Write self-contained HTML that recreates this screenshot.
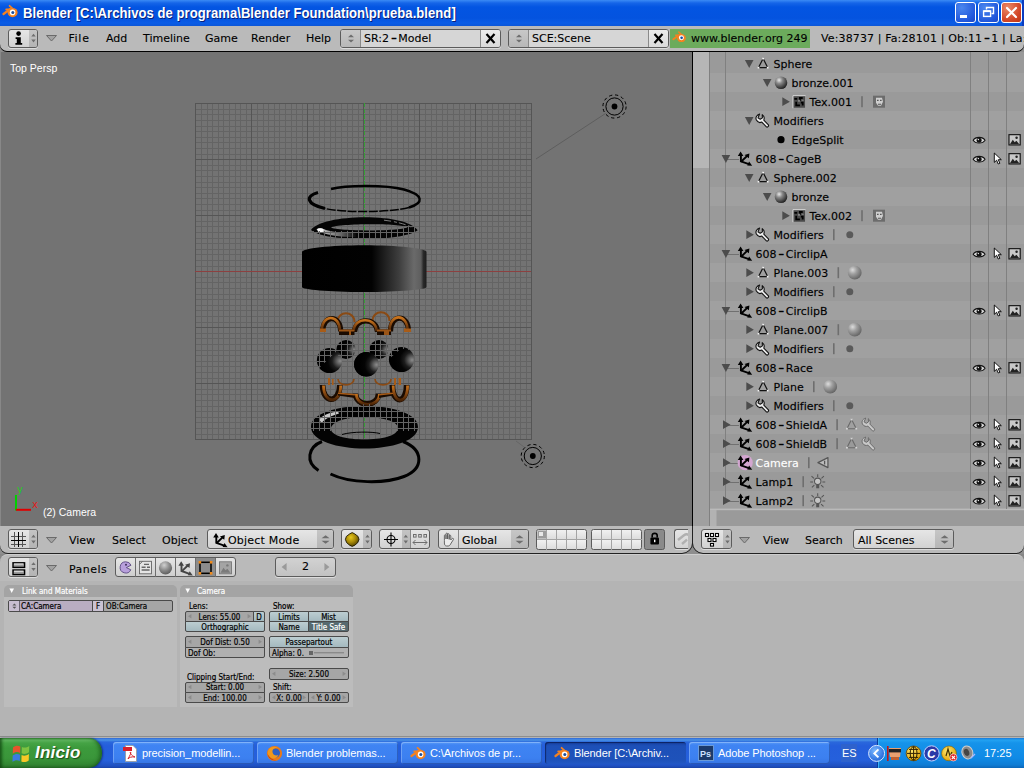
<!DOCTYPE html>
<html lang="es">
<head>
<meta charset="utf-8">
<title>Blender [C:\Archivos de programa\Blender Foundation\prueba.blend]</title>
<style>
html,body{margin:0;padding:0;}
body{width:1024px;height:768px;overflow:hidden;position:relative;background:#b4b4b4;font-family:"DejaVu Sans","Liberation Sans",sans-serif;font-size:11px;color:#000;}
.abs{position:absolute;}
div,span,svg{box-sizing:border-box;}
.t{position:absolute;white-space:pre;line-height:13px;height:13px;font-size:11px;-webkit-text-stroke:.18px rgba(0,0,0,.6);}
.hy{display:inline-block;width:9.2px;text-align:center;}
.hy i{display:inline-block;font-style:normal;transform:scale(1.5,1.15);transform-origin:50% 62%;-webkit-text-stroke:.25px #000;}
/* XP title bar */
#title{left:0;top:0;width:1024px;height:26px;box-shadow:inset -2px 0 0 #0b3cc0;background:linear-gradient(#3b8bf5 0,#1565e8 3px,#0355e2 7px,#0453df 18px,#0a5ce6 23px,#0b56d8 26px);}
#title .tt{position:absolute;left:22.6px;top:5.5px;transform:scale(1.006,1.1);transform-origin:0 55%;font:bold 13px "Liberation Sans",sans-serif;color:#fff;white-space:pre;text-shadow:1px 1px 0 #0a1f7a;letter-spacing:0.04px;}
.wb{position:absolute;top:2px;width:21px;height:21px;border:1px solid #fff;border-radius:3px;background:radial-gradient(circle at 30% 25%,#4a86ee,#2258dc 70%,#1a48c8);}
.wb.cl{background:radial-gradient(circle at 30% 25%,#ea8a68,#d4492a 60%,#bf3513);}
/* blender headers */
.hdr{background:#bababa;}
.btn{position:absolute;border:1px solid #5c5c5c;border-radius:3px;background:linear-gradient(#e6e6e6,#d2d2d2);box-shadow:0 1px 0 #dcdcdc;}
.menu{position:absolute;top:32px;}
</style>
</head>
<body>
<!-- XP title bar -->
<div id="title" class="abs">
<svg class="abs" style="left:2px;top:4px" width="18" height="16" viewBox="0 0 18 16"><g fill="none" stroke="#f5821f" stroke-linecap="round"><path d="M1.5 10 L8 5.2" stroke-width="2.2"/><path d="M4.2 5.4 H9" stroke-width="1.8"/><path d="M7.6 1.8 L10.6 4.6" stroke-width="1.8"/></g><ellipse cx="10.6" cy="8.6" rx="5" ry="4.6" fill="#f5821f"/><circle cx="10.6" cy="8.4" r="2.8" fill="#fff"/><circle cx="10.8" cy="8.4" r="1.5" fill="#1a4fa0"/></svg>
<span class="tt">Blender [C:\Archivos de programa\Blender Foundation\prueba.blend]</span>
<div class="wb" style="left:955px"><div class="abs" style="left:4px;top:12px;width:7px;height:3px;background:#fff"></div></div>
<div class="wb" style="left:978px"><svg class="abs" style="left:0;top:0" width="19" height="19"><path d="M7.5 6.5 V4.5 H14.5 V10.5 H12.5" fill="none" stroke="#fff" stroke-width="1.4"/><rect x="4.6" y="8" width="7" height="5.4" fill="none" stroke="#fff" stroke-width="1.4"/><path d="M4.6 8.2 H11.6" stroke="#fff" stroke-width="1.8"/></svg></div>
<div class="wb cl" style="left:1001px"><svg class="abs" style="left:0;top:0" width="19" height="19"><path d="M5 5 L14 14 M14 5 L5 14" stroke="#fff" stroke-width="2.2" stroke-linecap="round"/></svg></div>
</div>
<!-- info header -->
<div class="abs" style="left:0;top:26px;width:1024px;height:26px;background:#8e8e8e"></div>
<div class="abs hdr" style="left:0;top:26px;width:1024px;height:25px;border-radius:0 0 7px 7px/0 0 7px 7px;box-shadow:0 1px 0 #000"></div>
<div class="btn" style="left:8px;top:29px;width:30px;height:19px;overflow:hidden"><div class="abs" style="left:20px;top:0;width:9px;height:17px;background:linear-gradient(#c4c4c4,#b4b4b4)"></div>
<svg class="abs" style="left:0;top:0" width="28" height="17"><circle cx="9.6" cy="3.6" r="2.3" fill="#000"/><path d="M6.6 7.2 H11.8 V13 H13.2 V14.8 H6.4 V13 H7.8 V9 H6.6 Z" fill="#000"/><path d="M22.3 6.6 L24.5 3.8 L26.7 6.6 Z M22.3 9.6 L24.5 12.4 L26.7 9.6 Z" fill="#6e6e6e"/></svg></div>
<svg class="abs" style="left:45px;top:34px" width="14" height="9"><path d="M1.5 1.5 H11.5 L6.5 7 Z" fill="#a2a2a2" stroke="#6a6a6a" stroke-width="1"/></svg>
<span class="t" style="left:68.4px;top:32px;letter-spacing:.7px">File</span>
<span class="t" style="left:106px;top:32px">Add</span>
<span class="t" style="left:143px;top:32px">Timeline</span>
<span class="t" style="left:205px;top:32px">Game</span>
<span class="t" style="left:251px;top:32px">Render</span>
<span class="t" style="left:306px;top:32px">Help</span>
<!-- SR box -->
<div class="btn" style="left:340px;top:29px;width:161px;height:19px;background:#d6d6d6;overflow:hidden">
<div class="abs" style="left:0;top:0;width:20px;height:17px;background:linear-gradient(#c8c8c8,#b8b8b8);border-right:1px solid #8a8a8a"></div>
<svg class="abs" style="left:0;top:0" width="20" height="17"><path d="M7 7.2 L10 4.4 L13 7.2 Z M7 9.8 L10 12.6 L13 9.8 Z" fill="#6e6e6e"/></svg>
<div class="abs" style="left:139px;top:0;width:20px;height:17px;background:linear-gradient(#ececec,#dadada);border-left:1px solid #8a8a8a"></div>
<svg class="abs" style="left:140px;top:0" width="19" height="17"><path d="M5.5 4 L13.5 13 M13.5 4 L5.5 13" stroke="#000" stroke-width="2.2"/></svg>
</div>
<span class="t" style="left:364px;top:32px">SR:2<span class="hy"><i>-</i></span>Model</span>
<!-- SCE box -->
<div class="btn" style="left:508px;top:29px;width:161px;height:19px;background:#d6d6d6;overflow:hidden">
<div class="abs" style="left:0;top:0;width:20px;height:17px;background:linear-gradient(#c8c8c8,#b8b8b8);border-right:1px solid #8a8a8a"></div>
<svg class="abs" style="left:0;top:0" width="20" height="17"><path d="M7 7.2 L10 4.4 L13 7.2 Z M7 9.8 L10 12.6 L13 9.8 Z" fill="#6e6e6e"/></svg>
<div class="abs" style="left:139px;top:0;width:20px;height:17px;background:linear-gradient(#ececec,#dadada);border-left:1px solid #8a8a8a"></div>
<svg class="abs" style="left:140px;top:0" width="19" height="17"><path d="M5.5 4 L13.5 13 M13.5 4 L5.5 13" stroke="#000" stroke-width="2.2"/></svg>
</div>
<span class="t" style="left:532px;top:32px">SCE:Scene</span>
<!-- green link -->
<div class="abs" style="left:670px;top:29px;width:140px;height:19px;background:#6cab5c"></div>
<svg class="abs" style="left:672px;top:30px" width="16" height="15" viewBox="0 0 18 16"><g fill="none" stroke="#f5821f" stroke-linecap="round"><path d="M1.5 10 L8 5.2" stroke-width="2.2"/><path d="M4.2 5.4 H9" stroke-width="1.8"/><path d="M7.6 1.8 L10.6 4.6" stroke-width="1.8"/></g><ellipse cx="10.6" cy="8.6" rx="5" ry="4.6" fill="#f5821f"/><circle cx="10.6" cy="8.4" r="2.8" fill="#fff"/><circle cx="10.8" cy="8.4" r="1.5" fill="#1a4fa0"/></svg>
<span class="t" style="left:691px;top:32px">www.blender.org 249</span>
<span class="t" style="left:821px;top:32px;letter-spacing:.13px">Ve:38737 | Fa:28101 | Ob:11<span class="hy"><i>-</i></span>1 | La:2</span>
<!-- 3D view -->
<svg class="abs" style="left:0;top:52px" width="692" height="474" viewBox="0 0 692 474">
<defs>
<g id="grid" shape-rendering="crispEdges" fill="none"><path d="M201.5 51V388M195 57.5H532M207.5 51V388M195 62.5H532M212.5 51V388M195 68.5H532M218.5 51V388M195 74.5H532M223.5 51V388M195 79.5H532M229.5 51V388M195 85.5H532M235.5 51V388M195 90.5H532M240.5 51V388M195 96.5H532M246.5 51V388M195 102.5H532M257.5 51V388M195 113.5H532M263.5 51V388M195 118.5H532M268.5 51V388M195 124.5H532M274.5 51V388M195 130.5H532M279.5 51V388M195 135.5H532M285.5 51V388M195 141.5H532M291.5 51V388M195 146.5H532M296.5 51V388M195 152.5H532M302.5 51V388M195 158.5H532M313.5 51V388M195 169.5H532M319.5 51V388M195 174.5H532M324.5 51V388M195 180.5H532M330.5 51V388M195 186.5H532M335.5 51V388M195 191.5H532M341.5 51V388M195 197.5H532M347.5 51V388M195 202.5H532M352.5 51V388M195 208.5H532M358.5 51V388M195 214.5H532M369.5 51V388M195 225.5H532M375.5 51V388M195 230.5H532M380.5 51V388M195 236.5H532M386.5 51V388M195 242.5H532M391.5 51V388M195 247.5H532M397.5 51V388M195 253.5H532M403.5 51V388M195 258.5H532M408.5 51V388M195 264.5H532M414.5 51V388M195 270.5H532M425.5 51V388M195 281.5H532M431.5 51V388M195 286.5H532M436.5 51V388M195 292.5H532M442.5 51V388M195 298.5H532M447.5 51V388M195 303.5H532M453.5 51V388M195 309.5H532M459.5 51V388M195 314.5H532M464.5 51V388M195 320.5H532M470.5 51V388M195 326.5H532M481.5 51V388M195 337.5H532M487.5 51V388M195 342.5H532M492.5 51V388M195 348.5H532M498.5 51V388M195 354.5H532M503.5 51V388M195 359.5H532M509.5 51V388M195 365.5H532M515.5 51V388M195 370.5H532M520.5 51V388M195 376.5H532M526.5 51V388M195 382.5H532" stroke="#646464" stroke-width="1"/><path d="M195.5 51V388M195 51.5H532M251.5 51V388M195 107.5H532M307.5 51V388M195 163.5H532M363.5 51V388M195 219.5H532M419.5 51V388M195 275.5H532M475.5 51V388M195 331.5H532M531.5 51V388M195 387.5H532" stroke="#555" stroke-width="1"/></g>
<linearGradient id="race" x1="0" x2="1" y1="0" y2="0"><stop offset="0" stop-color="#000"/><stop offset=".56" stop-color="#020202"/><stop offset=".66" stop-color="#1e1e1e"/><stop offset=".78" stop-color="#3e3e3e"/><stop offset=".9" stop-color="#6a6a6a"/><stop offset=".955" stop-color="#5e5e5e"/><stop offset=".975" stop-color="#2a2a2a"/><stop offset="1" stop-color="#1c1c1c"/></linearGradient>
<radialGradient id="ball" cx=".92" cy=".52" r=".7"><stop offset="0" stop-color="#8c8c8c"/><stop offset=".2" stop-color="#5c5c5c"/><stop offset=".45" stop-color="#1c1c1c"/><stop offset=".7" stop-color="#040404"/><stop offset="1" stop-color="#000"/></radialGradient>
<linearGradient id="brz" x1="0" x2="0" y1="0" y2="1"><stop offset="0" stop-color="#c8741e"/><stop offset=".5" stop-color="#8a4a12"/><stop offset="1" stop-color="#4a2406"/></linearGradient>
<clipPath id="cS1"><path d="M300 179 H345 L380 177 L430 171 V190 H300Z"/></clipPath>
<clipPath id="cS2"><path d="M300 352 H430 V379 H300 Z"/></clipPath>
<clipPath id="cB"><circle cx="346" cy="297.5" r="10"/><circle cx="379" cy="297.5" r="10"/><path d="M312 288 H341 V295 L318 317 H312Z"/><path d="M385 288 H415 V299 L401 296.5 L389 307 H385Z"/></clipPath>
</defs>
<rect width="692" height="474" fill="#737373"/>
<use href="#grid"/>
<path d="M195 219.5H531" stroke="#8c4040" stroke-width="1" shape-rendering="crispEdges"/>
<path d="M364.5 51V387" stroke="#35a035" stroke-width="1" stroke-dasharray="4.4 1.2" shape-rendering="crispEdges"/>
<path d="M536 107L605.5 61.5" stroke="#5e5e5e" stroke-width="1"/>
<path d="M516 389L524 395" stroke="#666" stroke-width="1"/>
<g fill="none" stroke="#000"><circle cx="614.5" cy="54.5" r="8.6" stroke-width="1"/><circle cx="614.5" cy="54.5" r="11.6" stroke-width="1" stroke-dasharray="3.2 2.9"/><circle cx="614.5" cy="54.5" r="2.9" fill="#000" stroke="none"/></g>
<g fill="none" stroke="#000"><circle cx="532.8" cy="404" r="8.6" stroke-width="1"/><circle cx="532.8" cy="404" r="11.6" stroke-width="1" stroke-dasharray="3.2 2.9"/><circle cx="532.8" cy="404" r="2.9" fill="#000" stroke="none"/></g>
<g fill="none" stroke="#000" stroke-linecap="butt">
<path d="M331 137 C345 133.3 385 132.5 404 137.5 C424 143 424 151 409 155.5" stroke-width="2.4"/>
<path d="M409 155.5 C390 160.5 345 161 325 156.5" stroke-width="1.5" stroke-dasharray="9 1.5"/>
<path d="M325 156.5 C306 152 305 144 318 140.5" stroke-width="3.2"/>
</g>
<path fill-rule="evenodd" fill="#050505" d="M311 178 C316 170 340 165.2 364.5 165.2 C392 165.2 412 170 417.7 178.3 C412 182.5 395 187 364.5 187 C338 187 318 184 311 178 Z M331 175.6 C338 179.5 400 179.5 407.5 175.3 C400 171.2 338 171.4 331 175.6 Z"/>
<linearGradient id="shl" x1="0" x2="1" y1="0" y2="0"><stop offset="0" stop-color="#e8e8e8"/><stop offset=".25" stop-color="#a8a8a8"/><stop offset=".6" stop-color="#6a6a6a"/><stop offset="1" stop-color="#0a0a0a"/></linearGradient>
<path d="M316.5 177.5 C318 175.5 322 175.8 326 178 C334 180.5 345 181 356 181.2 L356 185 C340 185 324 183.5 316.5 177.5Z" fill="url(#shl)"/>
<ellipse cx="320.5" cy="178.2" rx="3" ry="1.9" fill="#f6f6f6"/>
<path d="M384 168.2 C396 169.5 407 172.5 413 176" fill="none" stroke="#8a8a8a" stroke-width=".9" stroke-dasharray="7 3 3 2"/>
<g clip-path="url(#cS1)"><use href="#grid"/></g>
<path fill="url(#race)" d="M302 200 C302 196.5 330 193.3 364 193.3 C398 193.3 426.5 196.5 426.5 200 V235 C426.5 237.5 400 240 364 240 C328 240 302 237.5 302 235 Z"/>
<g>
<path d="M337.5 270 C337.5 258.3 354.5 258.3 354.5 270" fill="none" stroke="#8a4a14" stroke-width="2"/>
<path d="M372.5 269 C372.5 257.3 389.5 257.3 389.5 269" fill="none" stroke="#8a4a14" stroke-width="2"/>
<path d="M322.7 279.5 C322.7 262.34 340.7 262.34 340.7 279.5" fill="none" stroke="#1a0b01" stroke-width="5.2"/>
<path d="M321.8 278.8 C321.8 261.64 339.8 261.64 339.8 278.8" fill="none" stroke="url(#brz)" stroke-width="2.6"/>
<path d="M354.5 280 C354.5 265.18 377.5 265.18 377.5 280" fill="none" stroke="#1a0b01" stroke-width="5.2"/>
<path d="M353.6 279.3 C353.6 264.48 376.6 264.48 376.6 279.3" fill="none" stroke="url(#brz)" stroke-width="2.6"/>
<path d="M390.5 279.5 C390.5 261.56 408.5 261.56 408.5 279.5" fill="none" stroke="#1a0b01" stroke-width="5.2"/>
<path d="M389.6 278.8 C389.6 260.86 407.6 260.86 407.6 278.8" fill="none" stroke="url(#brz)" stroke-width="2.6"/>
<path d="M320 276.5 h6 v3.4 h-6z M404 276.5 h7 v3.4 h-7z" fill="#a85c18"/>
<path d="M339 277.5 h15.5 v5.6 h-15.5z M377 277.5 h14 v5.6 h-14z" fill="#1a0b01"/>
<path d="M339 277.5 h15.5 v2 h-15.5z M377 277.5 h14 v2 h-14z M349 279.5 h2 v3.6 h-2z M384 279.5 h5 v3.6 h-5z" fill="#9a5416"/>
</g>
<circle cx="346" cy="297.5" r="9.6" fill="url(#ball)"/><circle cx="379" cy="297.5" r="9.6" fill="url(#ball)"/>
<circle cx="329.5" cy="308.5" r="12.6" fill="url(#ball)"/><circle cx="401.5" cy="307.5" r="12.6" fill="url(#ball)"/><circle cx="366.3" cy="312.3" r="12.2" fill="url(#ball)"/>
<g clip-path="url(#cB)"><use href="#grid"/></g>
<circle cx="366.3" cy="312.3" r="12.2" fill="url(#ball)"/>
<g>
<path d="M338 327 C338 334.8 354 334.8 354 327" fill="none" stroke="#8a4a14" stroke-width="1.6"/>
<path d="M375 327 C375 334.8 391 334.8 391 327" fill="none" stroke="#8a4a14" stroke-width="1.6"/>
<path d="M328 326 h2 v7 h-2z M332 327 h1.6 v6 h-1.6z M394 326 h2 v7 h-2z M398.6 326 h2.4 v7 h-2.4z" fill="#a85c18"/>
<path d="M322.59999999999997 333 C322.59999999999997 351.98 339.8 351.98 339.8 333" fill="none" stroke="#1a0b01" stroke-width="5.6"/>
<path d="M323.49999999999994 333.6 C323.49999999999994 352.58000000000004 340.7 352.58000000000004 340.7 333.6" fill="none" stroke="url(#brz)" stroke-width="2.8"/>
<path d="M355.5 341.5 C355.5 355.28 378.5 355.28 378.5 341.5" fill="none" stroke="#1a0b01" stroke-width="5.6"/>
<path d="M356.4 342.1 C356.4 355.88 379.4 355.88 379.4 342.1" fill="none" stroke="url(#brz)" stroke-width="2.8"/>
<path d="M392.3 333 C392.3 352.5 406.7 352.5 406.7 333" fill="none" stroke="#1a0b01" stroke-width="5.6"/>
<path d="M393.2 333.6 C393.2 353.1 407.59999999999997 353.1 407.59999999999997 333.6" fill="none" stroke="url(#brz)" stroke-width="2.8"/>
<path d="M338 340.5 l17 1.5 v4 l-17 -2.5z M379 342 l14 -1.5 v3 l-14 2.5z" fill="#1a0b01"/><path d="M338 340.5 l17 1.5 v1.6 l-17 -1.5z M379 342 l14 -1.5 v1.4 l-14 1.5z" fill="#a85c18"/>
</g>
<path fill-rule="evenodd" fill="#030303" d="M311 375 C311 361 338 354 364.5 354 C391 354 418 361 418 375 C418 389 391 396.5 364.5 396.5 C338 396.5 311 389 311 375 Z M331 377 C331 384 348 387.5 364.5 387.5 C381 387.5 398 384 398 376 C398 369 381 365 364.5 365 C348 365 331 369 331 377 Z"/>
<path d="M319 368 C322 363 330 360.5 338 359.5 L339 361.5 C331 364 324 367 322 371 Z" fill="#c8c8c8"/>
<g clip-path="url(#cS2)"><use href="#grid"/></g>
<path d="M342 382.5 C352 379.5 372 379.5 380 381.5" stroke="#000" stroke-width="1" fill="none"/>
<g fill="none" stroke="#000">
<path d="M322 389.5 C308 395 305 410 318.5 418.5" stroke-width="3"/>
<path d="M330.5 422 C350 431.5 385 432 404 424.5 C424 416.5 424 398 403 389.5" stroke-width="3"/>
</g>
<path d="M16 443V458.6" stroke="#00d000" stroke-width="2"/><path d="M16 457.8H31" stroke="#e00000" stroke-width="2"/><rect x="0" y="0" width="1" height="474" fill="#888"/>
<text x="17" y="441" font-family="DejaVu Sans, sans-serif" font-size="10" fill="#22cc22">y</text>
<text x="32" y="456" font-family="DejaVu Sans, sans-serif" font-size="10" fill="#e02020">x</text>
<text x="10" y="20" font-family="Liberation Sans, sans-serif" font-size="10.5" fill="#fff">Top Persp</text>
<text x="43" y="464" font-family="Liberation Sans, sans-serif" font-size="10.5" fill="#fff">(2) Camera</text>
</svg>
<!-- outliner -->
<div class="abs" style="left:692px;top:52px;width:1px;height:492px;background:#000"></div>
<svg style="left:693px;top:52px" width="331" height="474" viewBox="693 52 331 474" class="abs ol" font-family="DejaVu Sans, sans-serif" font-size="11">
<defs>
<radialGradient id="gmat" cx=".35" cy=".3" r=".75"><stop offset="0" stop-color="#e8e8e8"/><stop offset=".35" stop-color="#8a8a8a"/><stop offset="1" stop-color="#1c1c1c"/></radialGradient>
<radialGradient id="gmatl" cx=".35" cy=".3" r=".75"><stop offset="0" stop-color="#dcdcdc"/><stop offset=".4" stop-color="#a0a0a0"/><stop offset="1" stop-color="#606060"/></radialGradient>
<symbol id="i-obj" viewBox="0 0 14 14" overflow="visible"><g stroke="#000" fill="none" stroke-width="1.9"><path d="M2.9 3.5 V9.6 L11.6 12.7"/><path d="M3.1 10 L9.4 3.9"/></g><path d="M2.6 -.2 L5.4 4.3 H-.2 Z M11.4 1.8 L10.9 6.6 L6.5 3.3 Z M14.2 14.1 L9.2 13.9 L11.1 9.8 Z" fill="#000"/></symbol>
<symbol id="i-mesh" viewBox="0 0 14 14" overflow="visible"><path d="M7 1.6 L12 11.4 H2 Z" fill="none" stroke="#111" stroke-width="1.3"/><g fill="#f4f4f4"><rect x="6" y=".6" width="2" height="2"/><rect x="1" y="10.4" width="2" height="2"/><rect x="11" y="10.4" width="2" height="2"/></g></symbol>
<symbol id="i-meshl" viewBox="0 0 14 14" overflow="visible"><path d="M7 1.6 L12 11.4 H2 Z" fill="none" stroke="#6a6a6a" stroke-width="1.2"/><g fill="#d4d4d4"><rect x="6" y=".6" width="2" height="2"/><rect x="1" y="10.4" width="2" height="2"/><rect x="11" y="10.4" width="2" height="2"/></g></symbol>
<symbol id="i-wrench" viewBox="0 0 15 15" overflow="visible"><path d="M4.6 .8 C1.6 1.4 .2 4.4 1.4 6.8 C2.6 9 5 9.6 6.8 8.8 L11.4 13.6 C12.4 14.4 14.2 12.8 13.4 11.6 L8.8 6.8 C9.6 4.8 9 2.6 7.2 1.4 L7.4 4.6 L5.2 6 L3 4.6 Z" fill="#ececec" stroke="#111" stroke-width="1.1" stroke-linejoin="round"/></symbol>
<symbol id="i-wrenchl" viewBox="0 0 15 15" overflow="visible"><path d="M4.6 .8 C1.6 1.4 .2 4.4 1.4 6.8 C2.6 9 5 9.6 6.8 8.8 L11.4 13.6 C12.4 14.4 14.2 12.8 13.4 11.6 L8.8 6.8 C9.6 4.8 9 2.6 7.2 1.4 L7.4 4.6 L5.2 6 L3 4.6 Z" fill="#c8c8c8" stroke="#6a6a6a" stroke-width="1" stroke-linejoin="round"/></symbol>
<symbol id="i-tex" viewBox="0 0 14 14" overflow="visible"><rect x=".5" y=".5" width="13" height="13" fill="#4a4a4a"/><path d="M.5 14V.5H14" fill="none" stroke="#e0e0e0" stroke-width="1"/><path d="M2 3 h3 v2 h-3z M7 2 h4 v2 h-2 v2 h-2z M3 7 h2 v3 h3 v2 h-5z M9 7 h3 v4 h-2 v-2 h-1z" fill="#000"/><path d="M6 5 h2 v2 h-2z M10 5 h2 v1 h-2z" fill="#8a8a8a"/></symbol>
<symbol id="i-teximg" viewBox="0 0 12 12" overflow="visible"><rect width="12" height="12" fill="#6c6c6c"/><path d="M3 2 h6 l1 4 l-2 4 h-3 l-2 -3z" fill="#cfcfcf"/><path d="M4 4 h1.6 v1.4 h-1.6z M7 4 h1.6 v1.4 h-1.6z M5 8 h3 v1 h-3z" fill="#555"/></symbol>
<symbol id="i-eye" viewBox="0 0 14 10" overflow="visible"><path d="M.6 5 C3 1 11 1 13.4 5 C11 9 3 9 .6 5 Z" fill="#d8d8d8" stroke="#111" stroke-width="1.1"/><circle cx="7" cy="5" r="2.7" fill="#111"/><circle cx="6.2" cy="4.2" r=".8" fill="#ddd"/></symbol>
<symbol id="i-cur" viewBox="0 0 10 14" overflow="visible"><path d="M1 .8 V11.2 L3.6 8.8 L5.4 13 L7.2 12.2 L5.4 8.2 H8.8 Z" fill="#fff" stroke="#000" stroke-width="1" stroke-linejoin="round"/></symbol>
<symbol id="i-ren" viewBox="0 0 13 12" overflow="visible"><rect x=".6" y=".6" width="11.8" height="10.8" fill="#c8c8c8" stroke="#111" stroke-width="1.2"/><path d="M1.6 10.6 L4.6 6 L6.6 8.6 L8.4 7 L11.4 10.6 Z" fill="#222"/><circle cx="8.6" cy="3.8" r="1.3" fill="#222"/></symbol>
<symbol id="i-cam" viewBox="0 0 14 14" overflow="visible"><path d="M1.2 7 L12 1.6 V12.4 Z" fill="#bdbdbd" stroke="#555" stroke-width="1.3" stroke-linejoin="round"/><path d="M8.4 5 V9" stroke="#555" stroke-width="1.4"/></symbol>
<symbol id="i-lamp" viewBox="0 0 16 16" overflow="visible"><g stroke="#555" stroke-width="1.1" fill="none"><path d="M8 0 V3 M1.4 2 L4 4.4 M14.6 2 L12 4.4 M0 8.4 H3 M16 8.4 H13 M1.8 14 L4.4 11.6 M14.2 14 L11.6 11.6"/><circle cx="8" cy="7.6" r="3.4" fill="#c4c4c4"/></g><rect x="6.4" y="11" width="3.2" height="4" fill="#555"/></symbol>
</defs>
<style>.ol text{stroke:#000;stroke-width:.3px;stroke-opacity:.5}.ol text.w{stroke:#fff}</style>
<rect x="693" y="52" width="331" height="474" fill="#a0a0a0"/>
<rect x="709" y="52.0" width="315" height="21" fill="#9a9a9a"/>
<rect x="709" y="92.0" width="315" height="19" fill="#9a9a9a"/>
<rect x="709" y="130.0" width="315" height="19" fill="#9a9a9a"/>
<rect x="709" y="168.0" width="315" height="19" fill="#9a9a9a"/>
<rect x="709" y="206.0" width="315" height="19" fill="#9a9a9a"/>
<rect x="709" y="244.0" width="315" height="19" fill="#9a9a9a"/>
<rect x="709" y="282.0" width="315" height="19" fill="#9a9a9a"/>
<rect x="709" y="320.0" width="315" height="19" fill="#9a9a9a"/>
<rect x="709" y="358.0" width="315" height="19" fill="#9a9a9a"/>
<rect x="709" y="396.0" width="315" height="19" fill="#9a9a9a"/>
<rect x="709" y="434.0" width="315" height="19" fill="#9a9a9a"/>
<rect x="709" y="472.0" width="315" height="19" fill="#9a9a9a"/>
<rect x="693" y="52" width="16" height="474" fill="#a0a0a0"/>
<rect x="693" y="52" width="16" height="116" fill="#b6b6b6"/>
<rect x="709" y="509.7" width="315" height="16.3" fill="#9a9a9a"/>
<rect x="709" y="508.6" width="315" height="1.6" fill="#bababa"/>
<rect x="709" y="510" width="7.5" height="16" fill="#b2b2b2"/>
<g shape-rendering="crispEdges" stroke="#808080" stroke-width="1"><path d="M709.5 52V526M725.5 52V501M970.5 52V509M988.5 52V509M1006.5 52V509"/></g>
<path d="M744.9 59.900000000000006 h8.6 l-4.3 8 Z" fill="#4c4c4c"/>
<use href="#i-mesh" x="756.6" y="57.1" width="13" height="13"/>
<text x="773.6" y="68.0">Sphere</text>
<path d="M762.9 78.9 h8.6 l-4.3 8 Z" fill="#4c4c4c"/>
<circle cx="781.0" cy="82.7" r="6.3" fill="url(#gmat)"/>
<text x="791.6" y="87.0">bronze.001</text>
<path d="M782.3 97.3 v8.8 l7.6 -4.4 Z" fill="#4c4c4c"/>
<use href="#i-tex" x="792.5" y="95.2" width="13" height="13"/>
<text x="809.6" y="106.0">Tex.001</text>
<rect x="861.2" y="96.2" width="1.6" height="11" fill="#6e6e6e"/>
<use href="#i-teximg" x="873.0" y="95.7" width="12" height="12"/>
<path d="M744.9 116.9 h8.6 l-4.3 8 Z" fill="#4c4c4c"/>
<use href="#i-wrench" x="755.0" y="113.3" width="15" height="15"/>
<text x="773.6" y="125.0">Modifiers</text>
<circle cx="781.0" cy="139.7" r="3.6" fill="#000"/>
<text x="791.6" y="144.0">EdgeSplit</text>
<use href="#i-eye" x="972.6" y="135.5" width="13" height="9.3"/>
<use href="#i-ren" x="1008.4" y="134.1" width="12.4" height="11.4"/>
<path d="M725 159.2H739.0" stroke="#707070" stroke-width="1" shape-rendering="crispEdges"/>
<path d="M721.6 154.89999999999998 h8.6 l-4.3 8 Z" fill="#4c4c4c"/>
<use href="#i-obj" x="738.0" y="151.7" width="14" height="14"/>
<text x="755.6" y="163.0">608</text>
<text x="0" y="0" transform="translate(778.3 163.0) scale(1.5 1.15)" style="stroke-width:.3px;stroke-opacity:.9">-</text>
<text x="785.8" y="163.0">CageB</text>
<use href="#i-eye" x="972.6" y="154.5" width="13" height="9.3"/>
<use href="#i-cur" x="993.4" y="152.29999999999998" width="9" height="12.6"/>
<use href="#i-ren" x="1008.4" y="153.1" width="12.4" height="11.4"/>
<path d="M744.9 173.89999999999998 h8.6 l-4.3 8 Z" fill="#4c4c4c"/>
<use href="#i-mesh" x="756.6" y="171.1" width="13" height="13"/>
<text x="773.6" y="182.0">Sphere.002</text>
<path d="M762.9 192.89999999999998 h8.6 l-4.3 8 Z" fill="#4c4c4c"/>
<circle cx="781.0" cy="196.7" r="6.3" fill="url(#gmat)"/>
<text x="791.6" y="201.0">bronze</text>
<path d="M782.3 211.29999999999998 v8.8 l7.6 -4.4 Z" fill="#4c4c4c"/>
<use href="#i-tex" x="792.5" y="209.2" width="13" height="13"/>
<text x="809.6" y="220.0">Tex.002</text>
<rect x="861.2" y="210.2" width="1.6" height="11" fill="#6e6e6e"/>
<use href="#i-teximg" x="873.0" y="209.7" width="12" height="12"/>
<path d="M746.3 230.29999999999998 v8.8 l7.6 -4.4 Z" fill="#4c4c4c"/>
<use href="#i-wrench" x="755.0" y="227.29999999999998" width="15" height="15"/>
<text x="773.6" y="239.0">Modifiers</text>
<rect x="833.0" y="229.2" width="1.6" height="11" fill="#6e6e6e"/>
<circle cx="849.8" cy="234.7" r="3.5" fill="#5a5a5a"/>
<path d="M725 254.2H739.0" stroke="#707070" stroke-width="1" shape-rendering="crispEdges"/>
<path d="M721.6 249.89999999999998 h8.6 l-4.3 8 Z" fill="#4c4c4c"/>
<use href="#i-obj" x="738.0" y="246.7" width="14" height="14"/>
<text x="755.6" y="258.0">608</text>
<text x="0" y="0" transform="translate(778.3 258.0) scale(1.5 1.15)" style="stroke-width:.3px;stroke-opacity:.9">-</text>
<text x="785.8" y="258.0">CirclipA</text>
<use href="#i-eye" x="972.6" y="249.5" width="13" height="9.3"/>
<use href="#i-cur" x="993.4" y="247.29999999999998" width="9" height="12.6"/>
<use href="#i-ren" x="1008.4" y="248.1" width="12.4" height="11.4"/>
<path d="M746.3 268.3 v8.8 l7.6 -4.4 Z" fill="#4c4c4c"/>
<use href="#i-mesh" x="756.6" y="266.09999999999997" width="13" height="13"/>
<text x="773.6" y="277.0">Plane.003</text>
<rect x="837.5" y="267.2" width="1.6" height="11" fill="#6e6e6e"/>
<circle cx="854.7" cy="272.7" r="6.9" fill="url(#gmatl)"/>
<path d="M746.3 287.3 v8.8 l7.6 -4.4 Z" fill="#4c4c4c"/>
<use href="#i-wrench" x="755.0" y="284.3" width="15" height="15"/>
<text x="773.6" y="296.0">Modifiers</text>
<rect x="833.0" y="286.2" width="1.6" height="11" fill="#6e6e6e"/>
<circle cx="849.8" cy="291.7" r="3.5" fill="#5a5a5a"/>
<path d="M725 311.2H739.0" stroke="#707070" stroke-width="1" shape-rendering="crispEdges"/>
<path d="M721.6 306.9 h8.6 l-4.3 8 Z" fill="#4c4c4c"/>
<use href="#i-obj" x="738.0" y="303.7" width="14" height="14"/>
<text x="755.6" y="315.0">608</text>
<text x="0" y="0" transform="translate(778.3 315.0) scale(1.5 1.15)" style="stroke-width:.3px;stroke-opacity:.9">-</text>
<text x="785.8" y="315.0">CirclipB</text>
<use href="#i-eye" x="972.6" y="306.5" width="13" height="9.3"/>
<use href="#i-cur" x="993.4" y="304.3" width="9" height="12.6"/>
<use href="#i-ren" x="1008.4" y="305.09999999999997" width="12.4" height="11.4"/>
<path d="M746.3 325.3 v8.8 l7.6 -4.4 Z" fill="#4c4c4c"/>
<use href="#i-mesh" x="756.6" y="323.09999999999997" width="13" height="13"/>
<text x="773.6" y="334.0">Plane.007</text>
<rect x="837.5" y="324.2" width="1.6" height="11" fill="#6e6e6e"/>
<circle cx="854.7" cy="329.7" r="6.9" fill="url(#gmatl)"/>
<path d="M746.3 344.3 v8.8 l7.6 -4.4 Z" fill="#4c4c4c"/>
<use href="#i-wrench" x="755.0" y="341.3" width="15" height="15"/>
<text x="773.6" y="353.0">Modifiers</text>
<rect x="833.0" y="343.2" width="1.6" height="11" fill="#6e6e6e"/>
<circle cx="849.8" cy="348.7" r="3.5" fill="#5a5a5a"/>
<path d="M725 368.2H739.0" stroke="#707070" stroke-width="1" shape-rendering="crispEdges"/>
<path d="M721.6 363.9 h8.6 l-4.3 8 Z" fill="#4c4c4c"/>
<use href="#i-obj" x="738.0" y="360.7" width="14" height="14"/>
<text x="755.6" y="372.0">608</text>
<text x="0" y="0" transform="translate(778.3 372.0) scale(1.5 1.15)" style="stroke-width:.3px;stroke-opacity:.9">-</text>
<text x="785.8" y="372.0">Race</text>
<use href="#i-eye" x="972.6" y="363.5" width="13" height="9.3"/>
<use href="#i-cur" x="993.4" y="361.3" width="9" height="12.6"/>
<use href="#i-ren" x="1008.4" y="362.09999999999997" width="12.4" height="11.4"/>
<path d="M746.3 382.3 v8.8 l7.6 -4.4 Z" fill="#4c4c4c"/>
<use href="#i-mesh" x="756.6" y="380.09999999999997" width="13" height="13"/>
<text x="773.6" y="391.0">Plane</text>
<rect x="813.0" y="381.2" width="1.6" height="11" fill="#6e6e6e"/>
<circle cx="830.2" cy="386.7" r="6.9" fill="url(#gmatl)"/>
<path d="M746.3 401.3 v8.8 l7.6 -4.4 Z" fill="#4c4c4c"/>
<use href="#i-wrench" x="755.0" y="398.3" width="15" height="15"/>
<text x="773.6" y="410.0">Modifiers</text>
<rect x="833.0" y="400.2" width="1.6" height="11" fill="#6e6e6e"/>
<circle cx="849.8" cy="405.7" r="3.5" fill="#5a5a5a"/>
<path d="M725 425.2H739.0" stroke="#707070" stroke-width="1" shape-rendering="crispEdges"/>
<path d="M723.0 420.3 v8.8 l7.6 -4.4 Z" fill="#4c4c4c"/>
<use href="#i-obj" x="738.0" y="417.7" width="14" height="14"/>
<text x="755.6" y="429.0">608</text>
<text x="0" y="0" transform="translate(778.3 429.0) scale(1.5 1.15)" style="stroke-width:.3px;stroke-opacity:.9">-</text>
<text x="785.8" y="429.0">ShieldA</text>
<rect x="836.3" y="419.2" width="1.6" height="11" fill="#6e6e6e"/>
<use href="#i-meshl" x="845.1" y="418.09999999999997" width="13" height="13"/>
<use href="#i-wrenchl" x="861.1" y="417.3" width="15" height="15"/>
<use href="#i-eye" x="972.6" y="420.5" width="13" height="9.3"/>
<use href="#i-cur" x="993.4" y="418.3" width="9" height="12.6"/>
<use href="#i-ren" x="1008.4" y="419.09999999999997" width="12.4" height="11.4"/>
<path d="M725 444.2H739.0" stroke="#707070" stroke-width="1" shape-rendering="crispEdges"/>
<path d="M723.0 439.3 v8.8 l7.6 -4.4 Z" fill="#4c4c4c"/>
<use href="#i-obj" x="738.0" y="436.7" width="14" height="14"/>
<text x="755.6" y="448.0">608</text>
<text x="0" y="0" transform="translate(778.3 448.0) scale(1.5 1.15)" style="stroke-width:.3px;stroke-opacity:.9">-</text>
<text x="785.8" y="448.0">ShieldB</text>
<rect x="836.3" y="438.2" width="1.6" height="11" fill="#6e6e6e"/>
<use href="#i-meshl" x="845.1" y="437.09999999999997" width="13" height="13"/>
<use href="#i-wrenchl" x="861.1" y="436.3" width="15" height="15"/>
<use href="#i-eye" x="972.6" y="439.5" width="13" height="9.3"/>
<use href="#i-cur" x="993.4" y="437.3" width="9" height="12.6"/>
<use href="#i-ren" x="1008.4" y="438.09999999999997" width="12.4" height="11.4"/>
<path d="M725 463.2H739.0" stroke="#707070" stroke-width="1" shape-rendering="crispEdges"/>
<path d="M723.0 458.3 v8.8 l7.6 -4.4 Z" fill="#4c4c4c"/>
<circle cx="745.2" cy="462.7" r="7.6" fill="#d3a6d0"/>
<use href="#i-obj" x="738.0" y="455.7" width="14" height="14"/>
<text x="755.6" y="467.0" fill="#fff" class="w">Camera</text>
<rect x="808.0" y="457.2" width="1.6" height="11" fill="#6e6e6e"/>
<use href="#i-cam" x="816.8" y="456.09999999999997" width="13" height="13"/>
<use href="#i-eye" x="972.6" y="458.5" width="13" height="9.3"/>
<use href="#i-cur" x="993.4" y="456.3" width="9" height="12.6"/>
<use href="#i-ren" x="1008.4" y="457.09999999999997" width="12.4" height="11.4"/>
<path d="M725 482.2H739.0" stroke="#707070" stroke-width="1" shape-rendering="crispEdges"/>
<path d="M723.0 477.3 v8.8 l7.6 -4.4 Z" fill="#4c4c4c"/>
<use href="#i-obj" x="738.0" y="474.7" width="14" height="14"/>
<text x="755.6" y="486.0">Lamp1</text>
<rect x="802.4" y="476.2" width="1.6" height="11" fill="#6e6e6e"/>
<use href="#i-lamp" x="810.2" y="474.2" width="15" height="15"/>
<use href="#i-eye" x="972.6" y="477.5" width="13" height="9.3"/>
<use href="#i-cur" x="993.4" y="475.3" width="9" height="12.6"/>
<use href="#i-ren" x="1008.4" y="476.09999999999997" width="12.4" height="11.4"/>
<path d="M725 501.2H739.0" stroke="#707070" stroke-width="1" shape-rendering="crispEdges"/>
<path d="M723.0 496.3 v8.8 l7.6 -4.4 Z" fill="#4c4c4c"/>
<use href="#i-obj" x="738.0" y="493.7" width="14" height="14"/>
<text x="755.6" y="505.0">Lamp2</text>
<rect x="802.4" y="495.2" width="1.6" height="11" fill="#6e6e6e"/>
<use href="#i-lamp" x="810.2" y="493.2" width="15" height="15"/>
<use href="#i-eye" x="972.6" y="496.5" width="13" height="9.3"/>
<use href="#i-cur" x="993.4" y="494.3" width="9" height="12.6"/>
<use href="#i-ren" x="1008.4" y="495.09999999999997" width="12.4" height="11.4"/>
</svg>
<!-- 3D view header + outliner header -->
<div class="abs" style="left:0;top:526px;width:1024px;height:28px;background:#8e8e8e"></div>
<div class="abs hdr" style="left:0;top:526px;width:692px;height:27px;border-radius:0 0 10px 8px;box-shadow:0 1px 0 #222, 1px 0 0 #222"></div>
<div class="abs hdr" style="left:693px;top:526px;width:331px;height:27px;border-radius:0 0 8px 10px;box-shadow:0 1px 0 #222,-1px 0 0 #222"></div>
<!-- 3D header widgets -->
<div class="btn" style="left:8px;top:529px;width:30px;height:20px;overflow:hidden"><div class="abs" style="left:20px;top:0;width:9px;height:18px;background:linear-gradient(#c4c4c4,#b4b4b4)"></div>
<svg class="abs" style="left:0;top:.5px" width="28" height="17"><g fill="none" shape-rendering="crispEdges"><path d="M5.5 1V16M13.5 1V16M2 5.5H17M2 13.5H17" stroke="#555" stroke-width="1"/><path d="M9.5 1V16M2 9.5H17" stroke="#000" stroke-width="1"/></g><path d="M22.3 6.6 L24.5 3.8 L26.7 6.6 Z M22.3 9.6 L24.5 12.4 L26.7 9.6 Z" fill="#6e6e6e"/></svg></div>
<svg class="abs" style="left:45px;top:536px" width="14" height="9"><path d="M1.5 1.5 H11.5 L6.5 7 Z" fill="#a2a2a2" stroke="#6a6a6a" stroke-width="1"/></svg>
<span class="t" style="left:69px;top:534px">View</span>
<span class="t" style="left:112px;top:534px">Select</span>
<span class="t" style="left:162px;top:534px">Object</span>
<!-- object mode -->
<div class="btn" style="left:207px;top:529px;width:127px;height:20px;overflow:hidden"><div class="abs" style="left:109px;top:0;width:17px;height:18px;background:linear-gradient(#c6c6c6,#b6b6b6)"></div>
<svg class="abs" style="left:0;top:.5px" width="125" height="17"><g transform="translate(5.4 2.2)"><g stroke="#000" fill="none" stroke-width="1.9"><path d="M2.9 3.5 V9.6 L11.6 12.7"/><path d="M3.1 10 L9.4 3.9"/></g><path d="M2.6 -.2 L5.4 4.3 H-.2 Z M11.4 1.8 L10.9 6.6 L6.5 3.3 Z M14.2 14.1 L9.2 13.9 L11.1 9.8 Z" fill="#000"/></g><path d="M113.6 7.2 L117.6 4.2 L121.6 7.2 Z M113.6 9.8 L117.6 12.8 L121.6 9.8 Z" fill="#6e6e6e"/></svg></div>
<span class="t" style="left:228px;top:534px;letter-spacing:.2px">Object Mode</span>
<!-- shading -->
<div class="btn" style="left:341px;top:529px;width:31px;height:20px;overflow:hidden"><div class="abs" style="left:21px;top:0;width:9px;height:18px;background:linear-gradient(#c4c4c4,#b4b4b4)"></div>
<svg class="abs" style="left:0;top:.5px" width="29" height="17"><defs><radialGradient id="gy" cx=".4" cy=".35" r=".7"><stop offset="0" stop-color="#e6c81e"/><stop offset=".5" stop-color="#a88a08"/><stop offset="1" stop-color="#4a3c00"/></radialGradient></defs><path d="M10.2 1.6 L12.6 2.8 L16 5.4 L17 8.4 L15.8 11.6 L12.8 14.2 L10.2 15.4 L7.6 14.2 L4.6 11.6 L3.4 8.4 L4.4 5.4 L7.8 2.8 Z" fill="url(#gy)" stroke="#1c1600" stroke-width=".9"/><path d="M23.3 6.6 L25.5 3.8 L27.7 6.6 Z M23.3 9.6 L25.5 12.4 L27.7 9.6 Z" fill="#6e6e6e"/></svg></div>
<!-- pivot -->
<div class="btn" style="left:379px;top:529px;width:51px;height:20px;overflow:hidden"><div class="abs" style="left:22px;top:0;width:8px;height:18px;background:linear-gradient(#c4c4c4,#b4b4b4)"></div><div class="abs" style="left:30px;top:0;width:1px;height:18px;background:#8a8a8a"></div>
<svg class="abs" style="left:0;top:.5px" width="49" height="17"><g stroke="#000" fill="none" stroke-width="1.1"><circle cx="11" cy="8.5" r="4"/><path d="M11 1.5 V15.5 M4 8.5 H18"/></g><path d="M23.6 6.6 L25.8 3.8 L28 6.6 Z M23.6 9.6 L25.8 12.4 L28 9.6 Z" fill="#6e6e6e"/><g fill="none" stroke="#6e6e6e" stroke-width="1"><rect x="33.5" y="3.5" width="2.6" height="2.6"/><rect x="38.7" y="3.5" width="2.6" height="2.6"/><rect x="43.9" y="3.5" width="2.6" height="2.6"/><path d="M33 11.5 H47 M35.5 9 L33 11.5 L35.5 14 M44.5 9 L47 11.5 L44.5 14"/></g></svg></div>
<!-- manipulator + orientation -->
<div class="btn" style="left:438px;top:529px;width:91px;height:20px;overflow:hidden"><div class="abs" style="left:19px;top:0;width:1px;height:18px;background:#8a8a8a"></div><div class="abs" style="left:72px;top:0;width:17px;height:18px;background:linear-gradient(#c6c6c6,#b6b6b6)"></div>
<svg class="abs" style="left:0;top:.5px" width="89" height="17"><path d="M5.4 9.4 V4.6 C5.4 3.4 7 3.4 7 4.6 V8 V3 C7 1.8 8.6 1.8 8.6 3 V8 V3.6 C8.6 2.4 10.2 2.4 10.2 3.6 V8.4 V5 C10.2 3.8 11.8 3.8 11.8 5 V9 L13 7.6 C13.8 6.8 15 7.6 14.4 8.6 L11.6 13 C11 14.4 10.2 15 9 15 H7.6 C6 15 5.4 13.6 5.4 12 Z" fill="#ececec" stroke="#5a5a5a" stroke-width=".9" stroke-linejoin="round"/><path d="M76.6 7.2 L80.6 4.2 L84.6 7.2 Z M76.6 9.8 L80.6 12.8 L84.6 9.8 Z" fill="#6e6e6e"/></svg></div>
<span class="t" style="left:462px;top:534px">Global</span>
<!-- layers -->
<svg class="abs" style="left:536px;top:528px" width="130" height="23"><defs><linearGradient id="lg" x1="0" x2="0" y1="0" y2="1"><stop offset="0" stop-color="#f2f2f2"/><stop offset=".5" stop-color="#dcdcdc"/><stop offset=".5" stop-color="#f2f2f2"/><stop offset="1" stop-color="#dcdcdc"/></linearGradient></defs>
<rect x=".5" y="1.5" width="50" height="20" rx="2" fill="url(#lg)" stroke="#5c5c5c"/><path d="M10.5 1.5v20M20.5 1.5v20M30.5 1.5v20M40.5 1.5v20M.5 11.5H50.5" stroke="#a4a4a4" stroke-width="1" shape-rendering="crispEdges"/><rect x="1.5" y="2.5" width="8.5" height="8" fill="#9c9c9c"/><rect x="3" y="4" width="4" height="4" fill="#e8e8e8"/>
<rect x="55.5" y="1.5" width="50" height="20" rx="2" fill="url(#lg)" stroke="#5c5c5c"/><path d="M65.5 1.5v20M75.5 1.5v20M85.5 1.5v20M95.5 1.5v20M55.5 11.5H105.5" stroke="#a4a4a4" stroke-width="1" shape-rendering="crispEdges"/>
<rect x="108.5" y="1.5" width="20" height="20" rx="2" fill="#8a8a8a" stroke="#5c5c5c"/><rect x="114.4" y="9.4" width="8.6" height="7.2" rx="1" fill="#000"/><path d="M116.2 9.6 V7.6 C116.2 4.6 121.2 4.6 121.2 7.6 V9.6" fill="none" stroke="#000" stroke-width="1.6"/><rect x="118" y="11.6" width="1.4" height="2.6" fill="#fff"/></svg>
<div class="btn" style="left:674px;top:529px;width:24px;height:20px;border-right:none;border-radius:3px 0 0 3px;overflow:hidden;clip-path:inset(0 10px -2px 0)"><svg class="abs" style="left:0;top:.5px" width="22" height="17"><g fill="none" stroke="#b0b0b0" stroke-width="2.4"><path d="M3 9 L9 4.2 C12 2 15 4 15 7 M7 13 L12 8.6"/></g></svg></div>
<!-- outliner header widgets -->
<div class="btn" style="left:701px;top:529px;width:31px;height:20px;overflow:hidden"><div class="abs" style="left:21px;top:0;width:9px;height:18px;background:linear-gradient(#c4c4c4,#b4b4b4)"></div>
<svg class="abs" style="left:0;top:.5px" width="29" height="17"><g fill="#fff" stroke="#000" stroke-width="1.1"><rect x="3.5" y="2.5" width="3" height="3"/><rect x="8.5" y="2.5" width="3" height="3"/><rect x="13.5" y="2.5" width="3" height="3"/><rect x="6" y="7.5" width="3" height="3"/><rect x="11" y="7.5" width="3" height="3"/><rect x="8.5" y="12.5" width="3" height="2.6"/></g><path d="M23.3 6.6 L25.5 3.8 L27.7 6.6 Z M23.3 9.6 L25.5 12.4 L27.7 9.6 Z" fill="#6e6e6e"/></svg></div>
<svg class="abs" style="left:738px;top:536px" width="14" height="9"><path d="M1.5 1.5 H11.5 L6.5 7 Z" fill="#a2a2a2" stroke="#6a6a6a" stroke-width="1"/></svg>
<span class="t" style="left:763px;top:534px">View</span>
<span class="t" style="left:805px;top:534px">Search</span>
<div class="btn" style="left:853px;top:529px;width:101px;height:20px;overflow:hidden"><div class="abs" style="left:81px;top:0;width:19px;height:18px;background:linear-gradient(#c6c6c6,#b6b6b6)"></div>
<svg class="abs" style="left:0;top:.5px" width="99" height="17"><path d="M86.6 7.2 L90.6 4.2 L94.6 7.2 Z M86.6 9.8 L90.6 12.8 L94.6 9.8 Z" fill="#6e6e6e"/></svg></div>
<span class="t" style="left:858px;top:534px">All Scenes</span>
<!-- buttons header -->
<div class="abs" style="left:0;top:554px;width:1024px;height:10px;background:#868686"></div><div class="abs" style="left:0;top:554px;width:1024px;height:27px;background:#bababa;border-radius:8px 8px 0 0;border-top:1px solid #cdcdcd"></div>
<div class="abs" style="left:0;top:581px;width:1024px;height:156px;background:#b4b4b4;border-bottom:1px solid #8e8e8e"></div>
<div class="btn" style="left:8px;top:557px;width:30px;height:20px;overflow:hidden"><div class="abs" style="left:20px;top:0;width:9px;height:18px;background:linear-gradient(#c4c4c4,#b4b4b4)"></div>
<svg class="abs" style="left:0;top:0" width="28" height="18"><g fill="#9a9a9a" stroke="#000" stroke-width="1.4"><rect x="4" y="4.8" width="11.6" height="4.6"/><rect x="4" y="12" width="11.6" height="4.6"/></g><path d="M5 6 H14.4 M5 13.2 H14.4" stroke="#f0f0f0" stroke-width="1"/><path d="M22.3 7.1 L24.5 4.3 L26.7 7.1 Z M22.3 10.1 L24.5 12.9 L26.7 10.1 Z" fill="#6e6e6e"/></svg></div>
<svg class="abs" style="left:45px;top:563.5px" width="14" height="9"><path d="M1.5 1.5 H11.5 L6.5 7 Z" fill="#a2a2a2" stroke="#6a6a6a" stroke-width="1"/></svg>
<span class="t" style="left:69px;top:562.5px;letter-spacing:.45px">Panels</span>
<!-- context icon row -->
<svg class="abs" style="left:114px;top:556px" width="124" height="22"><defs><linearGradient id="bg2" x1="0" x2="0" y1="0" y2="1"><stop offset="0" stop-color="#e6e6e6"/><stop offset="1" stop-color="#cecece"/></linearGradient><radialGradient id="gsp" cx=".4" cy=".3" r=".75"><stop offset="0" stop-color="#d0d0d0"/><stop offset=".5" stop-color="#8e8e8e"/><stop offset="1" stop-color="#585858"/></radialGradient></defs>
<rect x="1.5" y="1.5" width="120" height="19" rx="2.5" fill="url(#bg2)" stroke="#5c5c5c"/>
<rect x="81.5" y="2" width="20" height="18" fill="#8c8c8c"/>
<path d="M21.5 1.5v19M41.5 1.5v19M61.5 1.5v19M81.5 1.5v19M101.5 1.5v19" stroke="#6e6e6e" stroke-width="1" shape-rendering="crispEdges"/>
<g transform="translate(0 .8)"><path d="M11.6 5 A5.6 5.6 0 1 0 16.8 13 L12.4 10.8 L17 8.4 A5.6 5.6 0 0 0 11.6 5 Z" fill="#b8a0dc" stroke="#5a4880" stroke-width=".9"/><circle cx="12" cy="8" r="1" fill="#40305c"/>
<g><rect x="25.5" y="4.5" width="12" height="12.5" fill="#e4e4e4" stroke="#666" stroke-width=".9"/><path d="M25.5 7.5 L28.5 4.5" stroke="#666"/><path d="M30 7.6 h5 M27.6 10.4 h4 M33 10.4 h3 M27.6 13.2 h8" stroke="#666" stroke-width="1.4"/></g>
<circle cx="51.5" cy="11" r="6.6" fill="url(#gsp)"/>
<g transform="translate(64.6 4.6)"><g stroke="#444" fill="none" stroke-width="1.9"><path d="M2.9 3.5 V9.6 L11.6 12.7"/><path d="M3.1 10 L9.4 3.9"/></g><path d="M2.6 -.2 L5.4 4.3 H-.2 Z M11.4 1.8 L10.9 6.6 L6.5 3.3 Z M14.2 14.1 L9.2 13.9 L11.1 9.8 Z" fill="#444"/></g>
<rect x="86" y="5.5" width="11" height="11" fill="none" stroke="#000" stroke-width="1.5"/><g fill="#f08a1a"><rect x="84.6" y="4.2" width="2.6" height="2.6"/><rect x="95.8" y="4.2" width="2.6" height="2.6"/><rect x="84.6" y="15.2" width="2.6" height="2.6"/><rect x="95.8" y="15.2" width="2.6" height="2.6"/></g>
<rect x="105.5" y="5" width="12" height="12" fill="#a4a4a4" stroke="#777" stroke-width=".9"/><path d="M106.5 16 L109.5 11 L111.5 13.4 L113.4 12 L116.4 16 Z" fill="#7a7a7a"/><circle cx="113.4" cy="8.6" r="1.2" fill="#7a7a7a"/>
</g></svg>
<!-- frame number -->
<div class="btn" style="left:275px;top:557px;width:61px;height:20px;background:linear-gradient(#d2d2d2,#c2c2c2)"><svg class="abs" style="left:0;top:0" width="59" height="18"><path d="M10.6 5 V13 L5.6 9 Z M48.4 5 V13 L53.4 9 Z" fill="#9a9a9a"/></svg><span class="t" style="left:26px;top:2px">2</span></div>
<!-- panels -->
<style>
.ph{position:absolute;top:585px;height:12px;background:#a4a4a4;border-radius:5px 5px 0 0;}
.pb{position:absolute;top:597px;height:110px;background:#bcbcbc;}
.s{position:absolute;white-space:pre;font-size:8.6px;line-height:10px;height:10px;-webkit-text-stroke:.22px currentColor;transform:scaleX(.835);transform-origin:0 0;}
.sc{text-align:center;transform-origin:50% 0;}
.f{position:absolute;border:1px solid #4a4a4a;background:#a6a6a6;}
.tg{background:linear-gradient(#bccdd1,#a4b9bf);}
</style>
<div class="ph" style="left:4px;width:173px"></div><div class="pb" style="left:4px;width:173px"></div>
<div class="ph" style="left:180px;width:173px"></div><div class="pb" style="left:180px;width:173px"></div>
<svg class="abs" style="left:9px;top:588px" width="6" height="6"><path d="M.4 .6 H5 L2.7 5 Z" fill="#fff"/></svg>
<svg class="abs" style="left:185px;top:588px" width="6" height="6"><path d="M.4 .6 H5 L2.7 5 Z" fill="#fff"/></svg>
<span class="s" style="left:22px;top:586px;color:#fff">Link and Materials</span>
<span class="s" style="left:197px;top:586px;color:#fff">Camera</span>
<!-- link and materials row -->
<div class="f" style="left:8px;top:600px;width:85px;height:12px;background:#b9adc2;border-radius:2px 0 0 2px"><div class="abs" style="left:0;top:0;width:11px;height:10px;background:#c8bed0;border-right:1px solid #6a6470"></div><svg class="abs" style="left:0;top:0" width="11" height="10"><path d="M3.4 4.4 L5.4 2.4 L7.4 4.4 Z M3.4 5.8 L5.4 7.8 L7.4 5.8 Z" fill="#555"/></svg></div>
<span class="s" style="left:21px;top:601px">CA:Camera</span>
<div class="f" style="left:92px;top:600px;width:12px;height:12px;background:#cac2d2"></div><span class="s" style="left:95.5px;top:601px">F</span>
<div class="f" style="left:103px;top:600px;width:70px;height:12px;background:#a6a6a6;border-radius:0 2px 2px 0"></div><span class="s" style="left:105.5px;top:601px">OB:Camera</span>
<!-- camera panel -->
<span class="s" style="left:188.6px;top:601px">Lens:</span>
<span class="s" style="left:272.6px;top:601px">Show:</span>
<div class="f" style="left:185px;top:610.5px;width:69px;height:11.5px;border-radius:2px 0 0 0"></div>
<div class="f tg" style="left:253px;top:610.5px;width:12px;height:11.5px;border-radius:0 2px 0 0"></div>
<div class="f tg" style="left:185px;top:621px;width:80px;height:11px;border-radius:0 0 2px 2px"></div>
<div class="f tg" style="left:269px;top:610.5px;width:40px;height:11.5px;border-radius:2px 0 0 0"></div>
<div class="f tg" style="left:308px;top:610.5px;width:41px;height:11.5px;border-radius:0 2px 0 0"></div>
<div class="f tg" style="left:269px;top:621px;width:40px;height:11px;border-radius:0 0 0 2px"></div>
<div class="f" style="left:308px;top:621px;width:41px;height:11px;border-radius:0 0 2px 0;background:#566a70"></div>
<span class="s sc" style="left:185px;width:69px;top:611.5px">Lens: 55.00</span>
<span class="s sc" style="left:253px;width:12px;top:611.5px">D</span>
<span class="s sc" style="left:185px;width:80px;top:621.8px">Orthographic</span>
<span class="s sc" style="left:269px;width:40px;top:611.5px">Limits</span>
<span class="s sc" style="left:308px;width:41px;top:611.5px">Mist</span>
<span class="s sc" style="left:269px;width:40px;top:621.8px">Name</span>
<span class="s sc" style="left:308px;width:41px;top:621.8px;color:#fff">Title Safe</span>
<div class="f" style="left:185px;top:636px;width:80px;height:11.5px;border-radius:2px 2px 0 0"></div>
<div class="f" style="left:185px;top:646.5px;width:80px;height:11.5px;border-radius:0 0 2px 2px;background:#b0b0b0"></div>
<div class="f tg" style="left:269px;top:636px;width:80px;height:11.5px;border-radius:2px 2px 0 0"></div>
<div class="f" style="left:269px;top:646.5px;width:80px;height:11.5px;border-radius:0 0 2px 2px;background:#b0b0b0"></div>
<span class="s sc" style="left:185px;width:80px;top:637px">Dof Dist: 0.50</span>
<span class="s" style="left:187.5px;top:647.6px">Dof Ob:</span>
<span class="s sc" style="left:269px;width:80px;top:637px">Passepartout</span>
<span class="s" style="left:271.5px;top:647.6px">Alpha: 0.</span>
<div class="abs" style="left:309px;top:650.5px;width:4px;height:4px;background:#666"></div><div class="abs" style="left:314px;top:651.5px;width:30px;height:2px;background:#a0a0a0;border-top:1px solid #8a8a8a"></div>
<div class="f" style="left:269px;top:668px;width:80px;height:11.5px;border-radius:2px"></div>
<span class="s sc" style="left:269px;width:80px;top:669px">Size: 2.500</span>
<span class="s" style="left:187.2px;top:671.5px">Clipping Start/End:</span>
<div class="f" style="left:185px;top:681.5px;width:80px;height:11px;border-radius:2px 2px 0 0"></div>
<div class="f" style="left:185px;top:691.5px;width:80px;height:11.5px;border-radius:0 0 2px 2px"></div>
<span class="s sc" style="left:185px;width:80px;top:682.2px">Start: 0.00</span>
<span class="s sc" style="left:185px;width:80px;top:692.6px">End: 100.00</span>
<span class="s" style="left:272.6px;top:682px">Shift:</span>
<div class="f" style="left:269px;top:691.5px;width:40px;height:11.5px;border-radius:2px 0 0 2px"></div>
<div class="f" style="left:308px;top:691.5px;width:41px;height:11.5px;border-radius:0 2px 2px 0"></div>
<span class="s sc" style="left:269px;width:40px;top:692.6px">X: 0.00</span>
<span class="s sc" style="left:308px;width:41px;top:692.6px">Y: 0.00</span>
<svg class="abs" style="left:185px;top:610px" width="165" height="94"><path fill="#8c8c8c" d="M3 6.2 l3.4 -2.3 v4.6z M66 6.2 l-3.4 -2.3 v4.6z M3 31.8 l3.4 -2.3 v4.6z M77 31.8 l-3.4 -2.3 v4.6z M3 77 l3.4 -2.3 v4.6z M77 77 l-3.4 -2.3 v4.6z M3 87.4 l3.4 -2.3 v4.6z M77 87.4 l-3.4 -2.3 v4.6z M87 63.8 l3.4 -2.3 v4.6z M161 63.8 l-3.4 -2.3 v4.6z M87 87.4 l3.4 -2.3 v4.6z M121 87.4 l-3.4 -2.3 v4.6z M126 87.4 l3.4 -2.3 v4.6z M161 87.4 l-3.4 -2.3 v4.6z"/></svg>
<!-- XP taskbar -->
<style>
#tb{left:0;top:738px;width:1024px;height:30px;background:linear-gradient(#3168d5 0,#4993e6 2px,#2a68dc 4px,#245edb 8px,#2560dc 22px,#1f50c0 28px,#1941a5 30px);font-family:"Liberation Sans",sans-serif;font-size:11px;color:#fff;}
.tk{position:absolute;top:4px;height:22px;width:141px;border-radius:3px;background:linear-gradient(#5a9bf8 0,#3f84f3 3px,#3c80f0 16px,#3674e4 22px);box-shadow:inset 1px 1px 0 rgba(255,255,255,.25),inset -1px -1px 0 rgba(0,0,40,.25);}
.tk.on{background:linear-gradient(#163f9e 0,#1d50b8 4px,#1e52ba 18px,#2258c4 22px);box-shadow:inset 1px 1px 1px rgba(0,0,30,.5);}
.tk span{position:absolute;left:29px;top:5px;white-space:pre;line-height:13px;letter-spacing:-0.1px;}
.tk svg{position:absolute;left:9px;top:3px;}
</style>
<div id="tb" class="abs">
<div class="abs" style="left:0;top:0;width:102px;height:30px;border-radius:0 13px 13px 0/0 15px 15px 0;background:linear-gradient(#3c8a3c 0,#5db35d 2px,#45a345 5px,#3c9a3c 10px,#3a963a 20px,#338833 26px,#2a702a 30px);box-shadow:1px 0 2px rgba(0,0,60,.5),inset 3px 0 3px -1px rgba(10,60,10,.7),inset -4px 0 4px -2px rgba(10,60,10,.6)"></div>
<svg class="abs" style="left:10px;top:5px" width="22" height="20"><g transform="rotate(-6 10 10) skewX(-8) translate(3 1) scale(1.12)"><path d="M1 2.4 C3 1 5.4 1 7.6 2.4 V8 C5.4 6.6 3 6.6 1 8 Z" fill="#e8542c"/><path d="M9 2.8 C11 4 13.4 4 15.6 2.6 V8.2 C13.4 9.6 11 9.6 9 8.4 Z" fill="#7cc242"/><path d="M1 9.6 C3 8.2 5.4 8.2 7.6 9.6 V15.2 C5.4 13.8 3 13.8 1 15.2 Z" fill="#3a7be0"/><path d="M9 10 C11 11.2 13.4 11.2 15.6 9.8 V15.4 C13.4 16.8 11 16.8 9 15.6 Z" fill="#f8c826"/></g></svg>
<span class="abs" style="left:35px;top:5px;font:italic bold 17px 'Liberation Sans',sans-serif;color:#fff;text-shadow:1px 1px 1px #1a4a1a;line-height:20px;letter-spacing:.2px">Inicio</span>
<div class="tk" style="left:113px"><svg width="17" height="17"><path d="M3.5 .5 H11 L14.5 4 V16.5 H3.5 Z" fill="#fff" stroke="#999" stroke-width=".8"/><rect x="1" y="2" width="9" height="4" fill="#d8202a"/><path d="M6 14 C8 10 9.4 8 8.6 7 C7.6 7 8.6 10.4 13 12 C9.4 11.4 6.8 12.6 6 14Z" fill="none" stroke="#d8202a" stroke-width="1"/></svg><span>precision_modellin...</span></div>
<div class="tk" style="left:257px"><svg width="17" height="17"><circle cx="8.5" cy="8.5" r="7.6" fill="#e87818"/><circle cx="9.4" cy="8" r="4.6" fill="#2f5fc0"/><path d="M2 6 C3 2 8 .6 12 2.4 C8 2.6 6 4.6 6.6 7.4 C7 10 10 11 12.4 10 C11 13.6 6.4 14.6 3.6 12 C1.8 10.4 1.4 8 2 6Z" fill="#f0981c"/><path d="M1.6 9 C2 13 6 16 10.4 15.4 C6.6 15 3.4 12.6 1.6 9Z" fill="#c8420c"/></svg><span>Blender problemas...</span></div>
<div class="tk" style="left:401px"><svg width="18" height="16" viewBox="0 0 18 16" style="top:4px"><g fill="none" stroke="#f5821f" stroke-linecap="round"><path d="M1.5 10 L8 5.2" stroke-width="2.2"/><path d="M4.2 5.4 H9" stroke-width="1.8"/><path d="M7.6 1.8 L10.6 4.6" stroke-width="1.8"/></g><ellipse cx="10.6" cy="8.6" rx="5" ry="4.6" fill="#f5821f"/><circle cx="10.6" cy="8.4" r="2.8" fill="#fff"/><circle cx="10.8" cy="8.4" r="1.5" fill="#1a4fa0"/></svg><span>C:\Archivos de pr...</span></div>
<div class="tk on" style="left:545px"><svg width="18" height="16" viewBox="0 0 18 16" style="top:4px"><g fill="none" stroke="#f5821f" stroke-linecap="round"><path d="M1.5 10 L8 5.2" stroke-width="2.2"/><path d="M4.2 5.4 H9" stroke-width="1.8"/><path d="M7.6 1.8 L10.6 4.6" stroke-width="1.8"/></g><ellipse cx="10.6" cy="8.6" rx="5" ry="4.6" fill="#f5821f"/><circle cx="10.6" cy="8.4" r="2.8" fill="#fff"/><circle cx="10.8" cy="8.4" r="1.5" fill="#1a4fa0"/></svg><span>Blender [C:\Archiv...</span></div>
<div class="tk" style="left:689px"><svg width="16" height="16"><rect x=".5" y=".5" width="15" height="15" fill="#1c3a6a" stroke="#6a9ad8" stroke-width="1"/><text x="2" y="11.6" font-family="Liberation Sans,sans-serif" font-size="9" font-weight="bold" fill="#cfe2ff">Ps</text></svg><span>Adobe Photoshop ...</span></div>
<div class="abs" style="left:841px;top:6px;width:16px;height:18px;background:#2e62cc"></div>
<span class="abs" style="left:842px;top:9px;line-height:13px;font-size:11px">ES</span>
<div class="abs" style="left:877px;top:0;width:147px;height:30px;background:linear-gradient(#1b78d8 0,#22a2f2 2px,#1593ea 5px,#0f8ae6 20px,#0f7cd4 27px,#0c66b8 30px);border-left:1px solid #0c3c98;box-shadow:inset 1px 0 0 #3ab0f6"></div>
<svg class="abs" style="left:867px;top:6px" width="150" height="19"><defs><radialGradient id="chev" cx=".4" cy=".35" r=".7"><stop offset="0" stop-color="#7ab8ff"/><stop offset="1" stop-color="#1e62d8"/></radialGradient><radialGradient id="yel" cx=".4" cy=".35" r=".7"><stop offset="0" stop-color="#ffe870"/><stop offset="1" stop-color="#e0a000"/></radialGradient></defs>
<circle cx="9.6" cy="9.4" r="8" fill="url(#chev)" stroke="#dce8ff" stroke-width="1"/><path d="M11.4 5.4 L7.4 9.4 L11.4 13.4" fill="none" stroke="#fff" stroke-width="2"/>
<rect x="20" y="2" width="1.6" height="15" fill="#c01818"/><path d="M22 4 h12 l-1 9 h-10z" fill="#e8a070"/><path d="M22 5 h12 v3.4 h-12z" fill="#222"/><path d="M24 13 h8 v3 h-8z" fill="#c06030"/>
<circle cx="46.6" cy="9.4" r="7.4" fill="url(#yel)" stroke="#604000" stroke-width=".8"/><path d="M40 9.4 h13.2 M46.6 2.6 v13.6 M42 5.4 h9.2 M42 13.4 h9.2" stroke="#302000" stroke-width="1" fill="none"/><ellipse cx="46.6" cy="9.4" rx="3.4" ry="6.8" fill="none" stroke="#302000" stroke-width="1"/>
<circle cx="64.6" cy="9.4" r="7.6" fill="#2a3aa8" stroke="#c8d4ff" stroke-width="1"/><text x="60" y="13.6" font-family="Liberation Sans,sans-serif" font-size="12" font-weight="bold" font-style="italic" fill="#fff">C</text>
<circle cx="82" cy="9.4" r="7.4" fill="url(#yel)" stroke="#806000" stroke-width=".6"/><path d="M79 12 l2 -7 l2 7 l2 -4" stroke="#403000" stroke-width="1.2" fill="none"/><circle cx="86.4" cy="13.4" r="3.6" fill="#e02020" stroke="#fff" stroke-width=".6"/><path d="M84.8 11.8 l3.2 3.2 m0 -3.2 l-3.2 3.2" stroke="#fff" stroke-width="1.1"/>
<ellipse cx="100.4" cy="8.4" rx="5.4" ry="6.6" fill="#8a8a8a" stroke="#d0d0d0" stroke-width="1" transform="rotate(-20 100.4 8.4)"/><ellipse cx="99.6" cy="8.4" rx="2.6" ry="3.6" fill="#444" transform="rotate(-20 99.6 8.4)"/><path d="M104 14 l4 -4" stroke="#a8b8ff" stroke-width="1.2"/>
</svg>
<span class="abs" style="left:984px;top:9px;line-height:13px;font-size:11px">17:25</span>
</div>
</body>
</html>
